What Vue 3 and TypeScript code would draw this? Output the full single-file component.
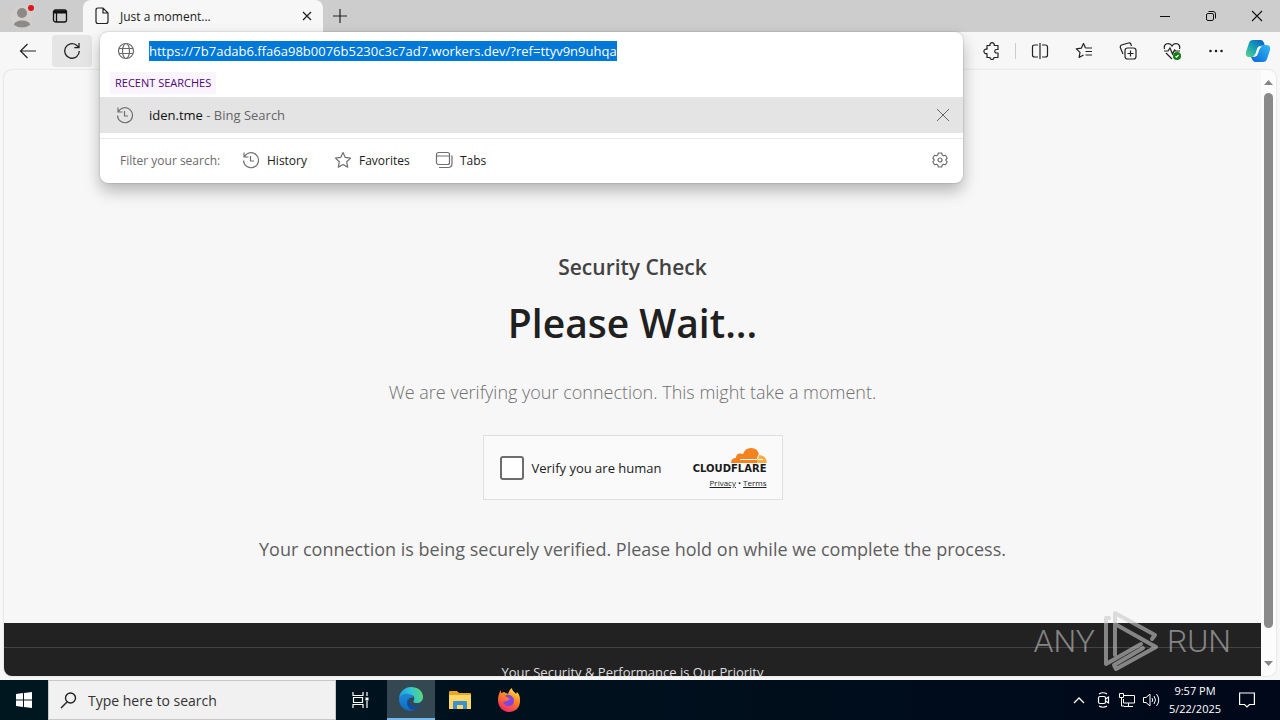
<script setup lang="ts">
import { ref } from 'vue'

const address = ref('https://7b7adab6.ffa6a98b0076b5230c3c7ad7.workers.dev/?ref=ttyv9n9uhqa')
const search = ref('')
const human = ref(false)
</script>

<template>
  <div class="desktop">
    <div class="browser">
      <header class="titlebar">
        <button class="chrome-btn profile" aria-label="Profile">
          <svg width="26" height="26" viewBox="0 0 26 26"><circle cx="12" cy="14" r="11" fill="#d3cfcd" /><circle cx="12" cy="10" r="5" fill="#8d8986" /><path d="M4 22c0-6 16-6 16 0q-8 5-16 0z" fill="#8d8986" /><circle cx="21" cy="5" r="3" fill="#e0141c" /></svg>
        </button>
        <button class="chrome-btn workspaces" aria-label="Tab actions">
          <svg width="16" height="16" viewBox="0 0 16 16" fill="none" stroke="#111" stroke-width="1.3"><rect x="1.5" y="2" width="13" height="12" rx="2" /><path d="M2 4h12" stroke-width="3" /><path d="M4.5 4v10" /></svg>
        </button>
        <div class="tab">
          <svg width="14" height="18" viewBox="0 0 14 18" fill="none" stroke="#222" stroke-width="1.2"><path d="M1 3q0-2 2-2h5l5 5v8.500q0 2-2 2H3q-2 0-2-2zM8 1v5h5" /></svg>
          <span class="tab-title">Just a moment...</span>
          <button class="chrome-btn tab-close" aria-label="Close tab">
            <svg width="10" height="10" viewBox="0 0 10 10" stroke="#222" stroke-width="1.3"><path d="M1 1l8 8M9 1l-8 8" /></svg>
          </button>
        </div>
        <button class="chrome-btn new-tab" aria-label="New tab">
          <svg width="14" height="14" viewBox="0 0 14 14" stroke="#222" stroke-width="1.2"><path d="M7 0v14M0 7h14" /></svg>
        </button>
        <div class="window-controls">
          <button class="chrome-btn win" aria-label="Minimize"><svg width="12" height="12" viewBox="0 0 12 12" stroke="#111"><path d="M1 6.500h10" /></svg></button>
          <button class="chrome-btn win" aria-label="Restore"><svg width="12" height="12" viewBox="0 0 12 12" fill="none" stroke="#111"><rect x="1.500" y="3.500" width="7" height="7" rx="1.500" /><path d="M3.500 1.500H8q2.500 0 2.500 2.500v4.500" /></svg></button>
          <button class="chrome-btn win" aria-label="Close"><svg width="12" height="12" viewBox="0 0 12 12" stroke="#111" stroke-width="1.100"><path d="M1 1l10 10M11 1L1 11" /></svg></button>
        </div>
      </header>

      <nav class="toolbar" aria-label="Browser toolbar">
        <button class="chrome-btn nav-btn" aria-label="Back"><svg width="18" height="16" viewBox="0 0 18 16" fill="none" stroke="#222" stroke-width="1.200"><path d="M8.500 1L1.500 8l7 7M1.500 8H17" /></svg></button>
        <button class="chrome-btn nav-btn refresh" aria-label="Refresh"><svg width="18" height="18" viewBox="0 0 18 18" fill="none" stroke="#222" stroke-width="1.300"><path d="M16.300 9A7.300 7.300 0 1 1 13.500 3.200L16 5.600M16 1v4.700h-4.700" /></svg></button>

        <div class="omnibox">
          <div class="address-row">
            <svg width="18" height="18" viewBox="0 0 18 18" fill="none" stroke="#6a6a6a" stroke-width="1.200"><circle cx="9" cy="9" r="7.500" /><ellipse cx="9" cy="9" rx="3.500" ry="7.500" /><path d="M2 6.500h14M2 11.500h14" /></svg>
            <div class="address-field"><input v-model="address" type="text" aria-label="Address" size="20" spellcheck="false" /></div>
          </div>
          <div class="recent-row"><span class="recent">RECENT SEARCHES</span></div>
          <div class="suggestion">
            <svg width="18" height="18" viewBox="0 0 18 18" fill="none" stroke="#6f6f6f" stroke-width="1.200"><path d="M2 1.500V6h4.500M2.300 5.800A7.500 7.500 0 1 1 1.500 9.500M8.500 5v5H12" /></svg>
            <a href="#" class="suggestion-text">iden.tme <span>- Bing Search</span></a>
            <button class="chrome-btn" aria-label="Remove suggestion"><svg width="12" height="12" viewBox="0 0 12 12" stroke="#666"><path d="M0 0l12 12M12 0L0 12" /></svg></button>
          </div>
          <div class="filters">
            <span class="filter-label">Filter your search:</span>
            <button class="chrome-btn filter history"><svg width="18" height="18" viewBox="0 0 18 18" fill="none" stroke="#6f6f6f" stroke-width="1.200"><path d="M2 1.500V6h4.500M2.300 5.800A7.500 7.500 0 1 1 1.500 9.500M8.500 5v5H12" /></svg>History</button>
            <button class="chrome-btn filter favorites"><svg width="18" height="18" viewBox="0 0 18 18" fill="none" stroke="#6f6f6f" stroke-width="1.200" stroke-linejoin="round"><path d="M9 1.500l2.300 4.900 5.300.7-3.900 3.700 1 5.300L9 13.500l-4.700 2.600 1-5.300L1.400 7.100l5.300-.7z" /></svg>Favorites</button>
            <button class="chrome-btn filter"><svg width="18" height="18" viewBox="0 0 18 18" fill="none" stroke="#6f6f6f" stroke-width="1.200"><rect x="1.500" y="1.500" width="13" height="12" rx="2" /><path d="M1.500 5h13M4 16.500h9q4 0 4-4v-8" /></svg>Tabs</button>
            <button class="chrome-btn settings" aria-label="Search settings"><svg width="16" height="16" viewBox="0 0 16 16" fill="none" stroke="#6f6f6f" stroke-width="1.200" stroke-linejoin="round"><path d="M6.300 1h3.400l.5 2 1.300.8 2-.6 1.700 3L13.700 8l1.500 1.800-1.700 3-2-.6-1.300.8-.5 2H6.300l-.5-2-1.300-.8-2 .6-1.700-3L2.300 8 .8 6.200l1.700-3 2 .6L5.800 3z" /><circle cx="8" cy="8" r="2" /></svg></button>
          </div>
        </div>

        <div class="actions">
          <button class="chrome-btn action" aria-label="Extensions"><svg width="18" height="18" viewBox="0 0 18 18" fill="none" stroke="#222" stroke-width="1.200" stroke-linejoin="round"><path d="M4 3.500h3a2.200 2.200 0 1 1 4.200 0H15v4h-1.500a1.700 1.700 0 1 0 0 3.500H15v4.500h-4a2 2 0 0 1-4 0H4v-4a2.300 2.300 0 1 1 0-4.300z" /></svg></button>
          <span class="divider"></span>
          <button class="chrome-btn action" aria-label="Split screen"><svg width="18" height="18" viewBox="0 0 18 18" fill="none" stroke="#222" stroke-width="1.200"><path d="M7 3H3.500Q1.500 3 1.500 5v8q0 2 2 2H7M11 3h3.500q2 0 2 2v8q0 2-2 2H11M9 1v16" /></svg></button>
          <button class="chrome-btn action" aria-label="Favorites"><svg width="18" height="18" viewBox="0 0 18 18" fill="none" stroke="#222" stroke-width="1.200" stroke-linejoin="round"><path d="M10.500 6L8.500 1.500 6.300 6.200l-5 .7 3.700 3.500-.9 5.100L8.500 13M10.500 6H17M10.500 9.500H17M10.500 13H17" /></svg></button>
          <button class="chrome-btn action" aria-label="Collections"><svg width="18" height="18" viewBox="0 0 18 18" fill="none" stroke="#222" stroke-width="1.200"><rect x="6" y="6" width="11" height="11" rx="2.500" /><path d="M11.500 8.500v6M8.500 11.500h6M4 12l-2.500-6q-.8-2 1-3L9.500 1q2-.5 2.500 1.500L12.500 4" /></svg></button>
          <button class="chrome-btn action" aria-label="Browser essentials"><svg width="18" height="18" viewBox="0 0 18 18" fill="none" stroke="#222" stroke-width="1.200"><path d="M1.500 7C0 1 7 0 9 4c2-4 9-3 7.500 3M1 9h4l2-3 2.500 6 2-4 1 1H17M3 11l6 6" /><circle cx="14" cy="14" r="4" fill="#107c10" stroke="none" /><path d="M12.500 14.300l1 .9 2-2.200" stroke="#fff" /></svg></button>
          <button class="chrome-btn action" aria-label="More"><svg width="18" height="18" viewBox="0 0 18 18" fill="#222"><circle cx="3.500" cy="9" r="1.300" /><circle cx="9" cy="9" r="1.300" /><circle cx="14.500" cy="9" r="1.300" /></svg></button>
          <button class="chrome-btn copilot" aria-label="Copilot">
            <svg width="26" height="24" viewBox="0 0 26 24">
              <defs>
                <linearGradient id="cpa" x1="0" y1="1" x2="1" y2="0"><stop offset="0" stop-color="#62d486" /><stop offset=".45" stop-color="#16a5b5" /><stop offset="1" stop-color="#0a56c5" /></linearGradient>
                <linearGradient id="cpb" x1="0" y1="1" x2="1" y2="0"><stop offset="0" stop-color="#0967d6" /><stop offset="1" stop-color="#32b9f5" /></linearGradient>
              </defs>
              <path d="M8 1h8q2 0 3 3l1 3h-4q-3 0-4 3l-1 5q-1 3-4 3H4q-4 0-3-5L4 4q1-3 4-3z" fill="url(#cpa)" />
              <path d="M18 23h-8q-2 0-3-3l-1-2h3q2 0 3-3l2-6q1-3 4-3h3q5 0 4 5l-3 9q-1 3-4 3z" fill="url(#cpb)" />
              <path d="M14 7.500h3q-2 1-3 4l-1 3q-1 3-3 3H8q2-1 3-4l1-3q1-3 2-3z" fill="#fff" />
            </svg>
          </button>
        </div>
      </nav>

      <div class="viewport">
        <div class="page">
          <main class="content">
            <h2>Security Check</h2>
            <h1>Please Wait...</h1>
            <p class="lead">We are verifying your connection. This might take a moment.</p>
            <div class="widget">
              <label class="verify"><input v-model="human" type="checkbox" />Verify you are human</label>
              <div class="brand">
                <svg class="cloud" width="36" height="17" viewBox="0 0 36 17"><path d="M0 16q0-5 5-5 0-6 7-4 2-6 8-6 7 0 8 7l-2 8z" fill="#f6821f" /><path d="M26 16l2-8q7 0 8 8z" fill="#fbad41" /><path d="M9 12.500h17l2-5M27 12.500h5" fill="none" stroke="#fff" stroke-width="1" /></svg>
                <b class="brand-name">CLOUDFLARE</b>
                <span class="legal"><a href="#">Privacy</a> • <a href="#">Terms</a></span>
              </div>
            </div>
            <p class="status">Your connection is being securely verified. Please hold on while we complete the process.</p>
          </main>
          <footer class="page-footer"><p>Your Security &amp; Performance is Our Priority</p></footer>
        </div>
        <div class="scrollbar" aria-hidden="true">
          <svg width="9" height="5" viewBox="0 0 9 5"><path d="M0 5L4.500 0 9 5z" fill="#858585" /></svg>
          <div class="thumb"></div>
          <svg width="9" height="5" viewBox="0 0 9 5"><path d="M0 0l4.500 5L9 0z" fill="#858585" /></svg>
        </div>
      </div>
    </div>

    <div class="watermark">
      <span>ANY</span>
      <svg width="56" height="62" viewBox="0 0 56 62" fill="none" stroke="currentColor" stroke-width="4" stroke-linecap="round" stroke-linejoin="round"><path d="M12 45V3L52 25l-3 4M12 14l41 23L13 59l-2-4 29-17M6 8H3v46l35-20" /></svg>
      <span>RUN</span>
    </div>

    <footer class="taskbar">
      <button class="task start" aria-label="Start"><svg width="16" height="16" viewBox="0 0 16 16" fill="#fff"><path d="M0 2l7-1v6.500H0zM8 1l8-1v7.500H8zM0 8.500h7V15l-7-1zM8 8.500h8V16l-8-1z" /></svg></button>
      <label class="task-search">
        <svg width="17" height="17" viewBox="0 0 17 17" fill="none" stroke="#222" stroke-width="1.400"><circle cx="10.500" cy="6" r="5" /><path d="M7 10l-6 6" /></svg>
        <input v-model="search" type="text" placeholder="Type here to search" aria-label="Type here to search" />
      </label>
      <button class="task task-view" aria-label="Task view"><svg width="17" height="16" viewBox="0 0 17 16" fill="none" stroke="#fff" stroke-width="1.200"><path d="M1 0v3.500h10V0M1 16v-3.500h10V16M1.500 5.500h9v5h-9zM15 0v4M15 9v7" /><path d="M13.500 5.500h3v3h-3z" fill="#fff" stroke="none" /></svg></button>
      <button class="task active" aria-label="Microsoft Edge">
        <svg width="24" height="24" viewBox="0 0 24 24">
          <defs>
            <linearGradient id="ea" x1="0" y1=".5" x2="1" y2=".3"><stop offset="0" stop-color="#229bdd" /><stop offset=".5" stop-color="#2fc3d6" /><stop offset="1" stop-color="#5fd970" /></linearGradient>
            <linearGradient id="eb" x1="0" y1="0" x2="0" y2="1"><stop offset="0" stop-color="#1b8ad8" /><stop offset="1" stop-color="#0f6cc0" /></linearGradient>
          </defs>
          <path d="M0 11C1 4 6 0 12 0c7 0 12 4 12 10 0 4-3 6-6 6-4 0-4-1-3-3 1-3-1-5-4-5-5 0-9 2-11 3z" fill="url(#ea)" />
          <path d="M0 12c1-4 6-6 9-5 3 0 5 2 5 4-4-1-6 2-5 6 1 3 4 6 7 6C7 26 0 20 0 12z" fill="url(#eb)" />
          <path d="M9 12c-3 6 2 13 8 10 3-1 5-3 5-4-5 3-12 1-13-6z" fill="#104a9c" />
        </svg>
      </button>
      <button class="task" aria-label="File Explorer"><svg width="22" height="20" viewBox="0 0 22 20"><path d="M0 2q0-1 1-1h7l2 2h11q1 0 1 1v14H0z" fill="#e9a824" /><path d="M0 5h22v14H0z" fill="#ffd766" /><path d="M4 19v-7q0-1 1-1h12q1 0 1 1v7h-4v-4H8v4z" fill="#3e8fd0" /></svg></button>
      <button class="task" aria-label="Firefox">
        <svg width="24" height="24" viewBox="0 0 24 24">
          <defs><linearGradient id="fx" x1=".8" y1="0" x2=".3" y2="1"><stop offset="0" stop-color="#fff04a" /><stop offset=".4" stop-color="#ff8a22" /><stop offset="1" stop-color="#f5246b" /></linearGradient></defs>
          <path d="M1 12C1 8 2 5 4 2v3l3-1c1 1 3 1 4 2 1-3 2-5 4-6 0 3 3 4 4 6l1-2c3 3 3 6 3 9 0 7-5 11-11 11S1 19 1 12z" fill="url(#fx)" />
          <path d="M8 8q2-2 5-1 4 2 4 6t-4 5q-5 1-7-4l4-1 3-2z" fill="#8246dc" />
        </svg>
      </button>
      <div class="tray">
        <button class="task tray-btn" aria-label="Show hidden icons"><svg width="12" height="8" viewBox="0 0 12 8" fill="none" stroke="#fff" stroke-width="1.300"><path d="M1 7l5-5 5 5" /></svg></button>
        <button class="task tray-btn" aria-label="Camera"><svg width="14" height="16" viewBox="0 0 14 16" fill="none" stroke="#fff" stroke-width="1.200"><rect x="2.500" y="4.500" width="7" height="7" rx="1.500" /><path d="M9.500 7l3-2v6l-3-2M3 2q4-2.500 8 0M3 14q4 2.500 8 0" /></svg></button>
        <button class="task tray-btn" aria-label="Network"><svg width="16" height="14" viewBox="0 0 16 14" fill="none" stroke="#fff"><path d="M5 2.500h10.500v7.500H4.500V6M5 13.500h9M9.500 10v3M.5.500h4v4h-4zM2.500 5v8H5" /></svg></button>
        <button class="task tray-btn" aria-label="Volume"><svg width="17" height="14" viewBox="0 0 17 14" fill="none" stroke="#fff"><path d="M.5 4.500h2.500l4-3.500v12L3 9.500H.5zM9 5q1.500 2 0 4M11 3q3 4 0 8M13.500 1q4.500 6 0 12" /></svg></button>
        <button class="task clock"><span>9:57 PM</span><span>5/22/2025</span></button>
        <button class="task notice" aria-label="Notifications"><svg width="16" height="16" viewBox="0 0 16 16" fill="none" stroke="#fff" stroke-width="1.200"><path d="M.6 1h14.800v11.500H10.500L8 15l-2.500-2.500H.6z" /></svg></button>
      </div>
    </footer>
  </div>
</template>

<style>
html, body { margin: 0; height: 100%; }
</style>

<style scoped>
* { box-sizing: border-box; }
svg { flex: none; display: block; }
.desktop { position: relative; display: flex; flex-direction: column; height: 100vh; overflow: hidden; background: #f7f7f7; color: #1b1b1b; font-family: "Open Sans", "Noto Sans", sans-serif; font-size: 12px; }
.browser { flex: 1; min-height: 0; display: flex; flex-direction: column; padding-bottom: 4px; }
button, input { font: inherit; color: inherit; }
.chrome-btn, .task { display: flex; align-items: center; justify-content: center; padding: 0; border: 0; background: none; }

.titlebar { display: flex; flex: none; height: 32px; background: #cdcdcd; }
.profile { width: 46px; }
.workspaces { width: 28px; margin-right: 9px; }
.tab { display: flex; align-items: center; gap: 11px; width: 240px; padding: 0 11px 0 12px; background: #f7f7f7; border-radius: 8px 8px 0 0; }
.tab-title { flex: 1; }
.tab-close { width: 10px; height: 24px; }
.new-tab { width: 34px; }
.window-controls { display: flex; margin-left: auto; }
.win { width: 46px; }

.toolbar { position: relative; display: flex; flex: none; align-items: center; height: 38px; padding: 0 8px; }
.nav-btn { width: 40px; height: 32px; border-radius: 4px; }
.refresh { margin-left: 4px; background: #e5e5e5; }
.omnibox { position: absolute; z-index: 2; top: 0; left: 100px; right: 317px; padding-bottom: 2px; background: #fff; border-radius: 8px; box-shadow: 0 0 2px #0004, 0 8px 16px #0004; }
.address-row { display: flex; align-items: center; gap: 14px; height: 38px; padding: 0 17px; }
.address-field { flex: 1; }
.address-field input { field-sizing: content; width: auto; max-width: 100%; height: 20px; padding: 0; border: 0; outline: 0; background: #0078d7; color: #fff; font-size: 13px; }
.recent-row { height: 27px; padding: 2px 10px 0; }
.recent { display: inline-block; padding: 3px 5px; background: #faf5fc; color: #500778; font-size: 11px; line-height: 16px; }
.suggestion { display: flex; align-items: center; gap: 15px; height: 36px; padding: 0 14px 0 16px; background: #e4e4e4; }
.suggestion-text { flex: 1; color: #111; text-decoration: none; font-size: 13px; }
.suggestion-text span { color: #666; }
.filters { display: flex; align-items: center; height: 43px; margin-top: 5px; padding: 0 15px 0 20px; border-top: 1px solid #e8e8e8; }
.filter-label { width: 122px; color: #6a6a6a; font-size: 12px; }
.filter { gap: 7px; }
.history { width: 92px; justify-content: flex-start; }
.favorites { width: 101px; justify-content: flex-start; }
.settings { margin-left: auto; }
.actions { display: flex; align-items: center; margin-left: auto; }
.action { width: 44px; height: 32px; }
.divider { width: 1px; height: 16px; margin: 0 2px 0 1px; background: #ccc; }
.copilot { width: 40px; height: 32px; margin-right: -6px; }

.viewport { flex: 1; min-height: 0; display: flex; margin: 0 4px; overflow: hidden; border-radius: 8px; background: #f7f7f7; box-shadow: 0 0 2px #0003; }
.page { flex: 1; min-width: 0; overflow: hidden; }
.content { display: flex; flex-direction: column; align-items: center; padding-top: 179px; text-align: center; }
h1, h2, p { margin: 0; }
h2 { font-size: 21px; line-height: 36px; font-weight: 600; color: #424242; }
h1 { margin-top: 8px; font-size: 39px; line-height: 60px; font-weight: 600; color: #202020; }
.lead { margin-top: 24px; font-size: 18px; line-height: 30px; font-weight: 300; color: #707070; }
.widget { display: flex; align-items: center; justify-content: space-between; width: 300px; height: 65px; margin-top: 28px; padding: 0 15px 0 16px; background: #fafafa; border: 1px solid #e0e0e0; }
.verify { display: flex; align-items: center; gap: 8px; font-size: 13px; }
.verify input { appearance: none; width: 24px; height: 24px; margin: 0; border: 2px solid #6d6d6d; border-radius: 3px; background: #fff; }
.verify input:checked { background: #6d6d6d; }
.brand { display: flex; flex-direction: column; align-items: flex-end; }
.brand-name { font-family: "DejaVu Sans", sans-serif; font-size: 10px; line-height: 10px; }
.legal { margin-top: 3px; font-size: 8px; line-height: 11px; }
.legal a { color: #222; }
.status { margin-top: 34px; font-size: 18px; line-height: 30px; color: #5e5e5e; }
.page-footer { margin-top: 59px; padding-top: 24px; background: #222; color: #ddd; text-align: center; }
.page-footer p { padding: 14px 0 30px; border-top: 1px solid #444; font-size: 13px; line-height: 20px; }
.scrollbar { display: flex; flex-direction: column; align-items: center; width: 15px; padding: 10px 0; background: #fcfcfc; }
.thumb { flex: 1; width: 9px; margin: 8px 0 33px; border-radius: 5px; background: #8a8a8a; }

.watermark { position: absolute; z-index: 3; right: 49px; bottom: 48px; display: flex; align-items: center; gap: 8px; color: #c8c8c899; font-family: "Roboto", sans-serif; font-size: 32px; font-weight: 300; line-height: 62px; }

.taskbar { display: flex; flex: none; height: 40px; background: linear-gradient(90deg, #001720, #000819); color: #fff; }
.task { width: 49px; }
.start { width: 48px; }
.task-search { display: flex; align-items: center; gap: 11px; width: 288px; padding: 0 11px; border: 1px solid #c6c6c6; background: #f1f1f1; color: #333; }
.task-search input { flex: 1; min-width: 0; padding: 0; border: 0; outline: 0; background: none; font-size: 14px; }
.task-search input::placeholder { color: #333; opacity: 1; }
.task-view { width: 51px; padding-right: 3px; }
.active { width: 48px; background: #334850; border-bottom: 2px solid #76b9ed; }
.tray { display: flex; margin-left: auto; }
.tray-btn { width: 24px; }
.clock { flex-direction: column; width: 64px; font-size: 11px; line-height: 18px; }
.notice { width: 40px; margin-right: 13px; }
</style>
